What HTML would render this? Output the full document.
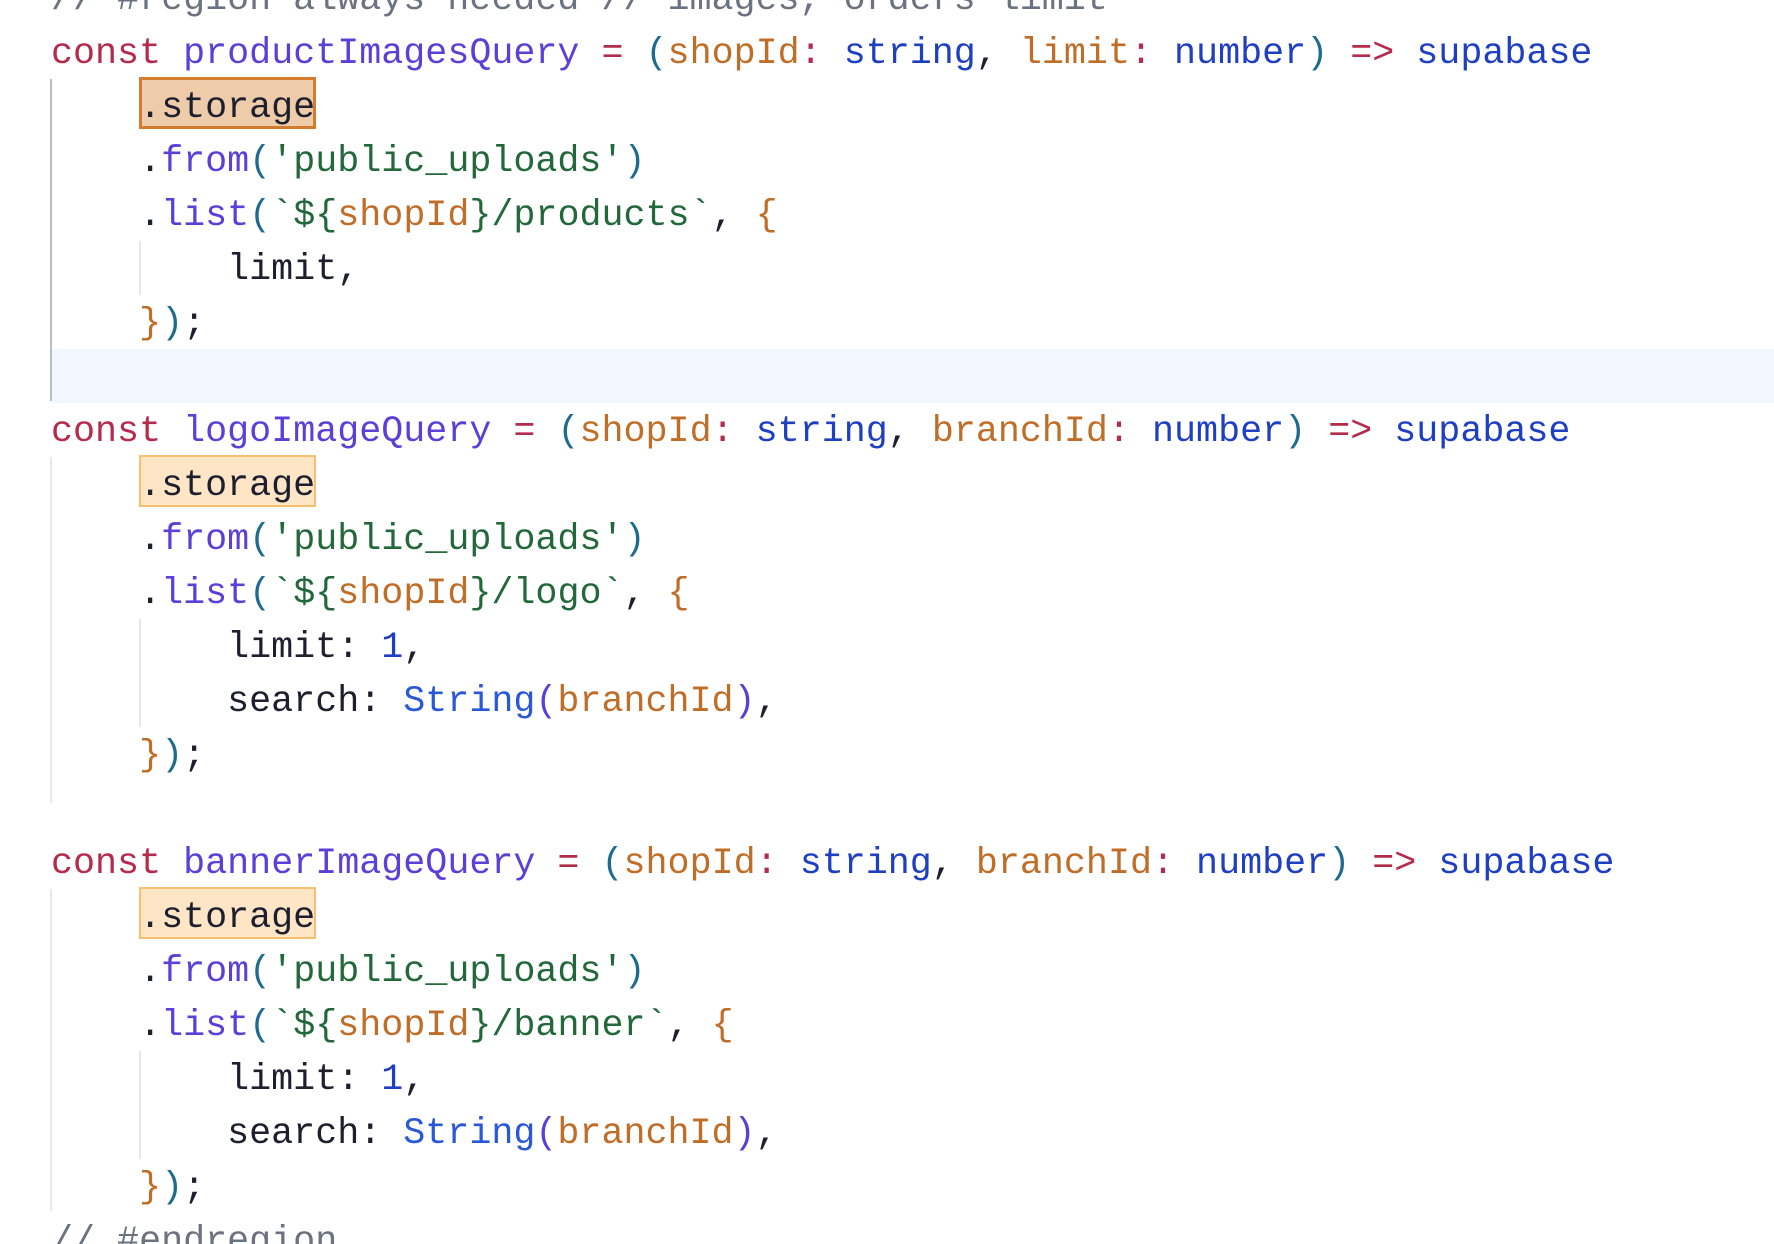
<!DOCTYPE html>
<html><head><meta charset="utf-8"><style>
html,body{margin:0;padding:0;background:#fff;width:1774px;height:1244px;overflow:hidden;position:relative}
.l{position:absolute;left:51px;height:54px;line-height:54px;white-space:pre;font-family:"Liberation Mono",monospace;font-size:36.7px;color:#1d1f2e;margin-top:2px}
.k{color:#b42b4b}.f{color:#5b40d8}.p{color:#1f6b8f}.a{color:#c06d28}.t{color:#1f3fc2}.s{color:#22683a}.n{color:#1f3fc2}.S{color:#2a58d8}.v{color:#5b40d8}.c{color:#6b7280}
.hl{position:absolute;box-sizing:border-box}
.g{position:absolute;width:2px}
</style></head><body>
<div class="hl" style="left:51px;top:349px;width:1723px;height:54px;background:#f2f6fe"></div>
<div class="hl" style="left:139px;top:77px;width:177px;height:52px;background:#eecba9;border:3px solid #d37b2e"></div>
<div class="hl" style="left:139px;top:455px;width:177px;height:52px;background:#fde5c6;border:2px solid #f7bf6f"></div>
<div class="hl" style="left:139px;top:887px;width:177px;height:52px;background:#fde5c6;border:2px solid #f7bf6f"></div>
<div class="g" style="left:50px;top:79px;height:322px;background:#b8bcc6"></div>
<div class="g" style="left:50px;top:457px;height:346px;background:#e5e7ec"></div>
<div class="g" style="left:50px;top:889px;height:322px;background:#e5e7ec"></div>
<div class="g" style="left:139px;top:241px;height:54px;background:#e5e7ec"></div>
<div class="g" style="left:139px;top:619px;height:108px;background:#e5e7ec"></div>
<div class="g" style="left:139px;top:1051px;height:108px;background:#e5e7ec"></div>

<div class="l c" style="top:-29px">// #region always needed // images, orders limit</div>
<div class="l" style="top:25px"><span class="k">const</span> <span class="f">productImagesQuery</span> <span class="k">=</span> <span class="p">(</span><span class="a">shopId</span><span class="k">:</span> <span class="t">string</span>, <span class="a">limit</span><span class="k">:</span> <span class="t">number</span><span class="p">)</span> <span class="k">=&gt;</span> <span class="n">supabase</span></div>
<div class="l" style="top:79px">    .storage</div>
<div class="l" style="top:133px">    .<span class="f">from</span><span class="p">(</span><span class="s">'public_uploads'</span><span class="p">)</span></div>
<div class="l" style="top:187px">    .<span class="f">list</span><span class="p">(</span><span class="s">`${</span><span class="a">shopId</span><span class="s">}/products`</span>, <span class="a">{</span></div>
<div class="l" style="top:241px">        limit,</div>
<div class="l" style="top:295px">    <span class="a">}</span><span class="p">)</span>;</div>

<div class="l" style="top:403px"><span class="k">const</span> <span class="f">logoImageQuery</span> <span class="k">=</span> <span class="p">(</span><span class="a">shopId</span><span class="k">:</span> <span class="t">string</span>, <span class="a">branchId</span><span class="k">:</span> <span class="t">number</span><span class="p">)</span> <span class="k">=&gt;</span> <span class="n">supabase</span></div>
<div class="l" style="top:457px">    .storage</div>
<div class="l" style="top:511px">    .<span class="f">from</span><span class="p">(</span><span class="s">'public_uploads'</span><span class="p">)</span></div>
<div class="l" style="top:565px">    .<span class="f">list</span><span class="p">(</span><span class="s">`${</span><span class="a">shopId</span><span class="s">}/logo`</span>, <span class="a">{</span></div>
<div class="l" style="top:619px">        limit: <span class="n">1</span>,</div>
<div class="l" style="top:673px">        search: <span class="S">String</span><span class="v">(</span><span class="a">branchId</span><span class="v">)</span>,</div>
<div class="l" style="top:727px">    <span class="a">}</span><span class="p">)</span>;</div>

<div class="l" style="top:835px"><span class="k">const</span> <span class="f">bannerImageQuery</span> <span class="k">=</span> <span class="p">(</span><span class="a">shopId</span><span class="k">:</span> <span class="t">string</span>, <span class="a">branchId</span><span class="k">:</span> <span class="t">number</span><span class="p">)</span> <span class="k">=&gt;</span> <span class="n">supabase</span></div>
<div class="l" style="top:889px">    .storage</div>
<div class="l" style="top:943px">    .<span class="f">from</span><span class="p">(</span><span class="s">'public_uploads'</span><span class="p">)</span></div>
<div class="l" style="top:997px">    .<span class="f">list</span><span class="p">(</span><span class="s">`${</span><span class="a">shopId</span><span class="s">}/banner`</span>, <span class="a">{</span></div>
<div class="l" style="top:1051px">        limit: <span class="n">1</span>,</div>
<div class="l" style="top:1105px">        search: <span class="S">String</span><span class="v">(</span><span class="a">branchId</span><span class="v">)</span>,</div>
<div class="l" style="top:1159px">    <span class="a">}</span><span class="p">)</span>;</div>
<div class="l c" style="top:1213px">// #endregion</div>
</body></html>
